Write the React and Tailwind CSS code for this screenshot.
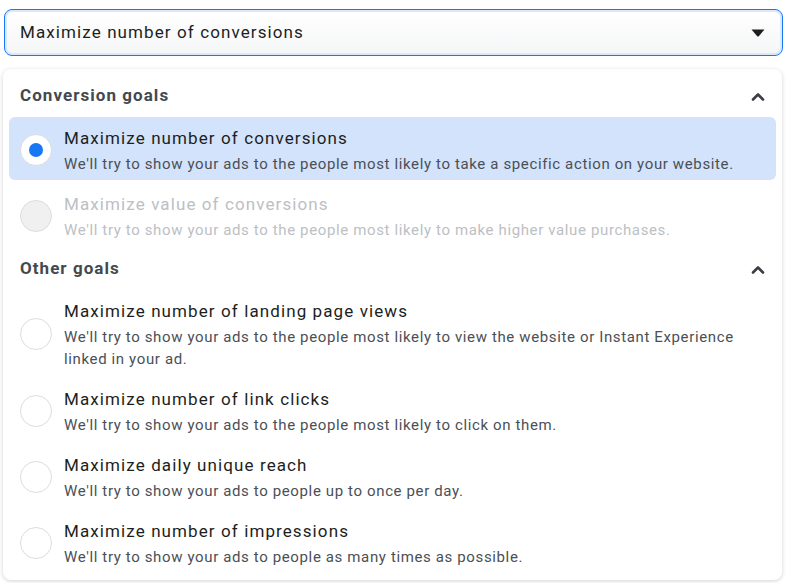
import React, { useState } from 'react';

const groups = [
  {
    title: 'Conversion goals',
    options: [
      {
        id: 'conversions',
        label: 'Maximize number of conversions',
        desc: "We'll try to show your ads to the people most likely to take a specific action on your website.",
      },
      {
        id: 'value',
        label: 'Maximize value of conversions',
        desc: "We'll try to show your ads to the people most likely to make higher value purchases.",
        disabled: true,
      },
    ],
  },
  {
    title: 'Other goals',
    options: [
      {
        id: 'landing',
        label: 'Maximize number of landing page views',
        desc: "We'll try to show your ads to the people most likely to view the website or Instant Experience linked in your ad.",
      },
      {
        id: 'clicks',
        label: 'Maximize number of link clicks',
        desc: "We'll try to show your ads to the people most likely to click on them.",
      },
      {
        id: 'reach',
        label: 'Maximize daily unique reach',
        desc: "We'll try to show your ads to people up to once per day.",
      },
      {
        id: 'impressions',
        label: 'Maximize number of impressions',
        desc: "We'll try to show your ads to people as many times as possible.",
      },
    ],
  },
];

const Radio = ({ checked, disabled }) => (
  <span
    className={`flex h-[32px] w-[32px] shrink-0 items-center justify-center rounded-full border ${
      disabled ? 'border-[#dadde1] bg-[#f0f0f0]' : 'border-[#dadde1] bg-white'
    }`}
  >
    {checked && <span className="h-[14px] w-[14px] rounded-full bg-[#1877f2]" />}
  </span>
);

const Chevron = () => (
  <svg width="14" height="9" viewBox="0 0 14 9" className="mr-[11px]">
    <path d="M2 7.5 L7 2.5 L12 7.5" fill="none" stroke="#3b3e43" strokeWidth="2.6" strokeLinecap="round" strokeLinejoin="round" />
  </svg>
);

export default function App() {
  const [selected, setSelected] = useState('conversions');
  const current = groups.flatMap((g) => g.options).find((o) => o.id === selected);

  return (
    <div className="min-h-[583px] w-[786px] bg-white pt-[9px] pl-[4px] pr-[3px] font-['Roboto',sans-serif]">
      {/* Select */}
      <div className="flex h-[47px] items-center justify-between rounded-[8px] border border-[#1877f2] bg-gradient-to-b from-white to-[#f5f6f7] pl-[15px] pr-[17px] shadow-[inset_0_0_0_2px_#dbe7fb]">
        <span className="text-[17px] tracking-[1.1px] text-[#1c1e21]">{current.label}</span>
        <svg width="14" height="8" viewBox="0 0 14 8">
          <path d="M0.5 0.5 H13.5 L8 7 Q7 8 6 7 Z" fill="#1c1e21" />
        </svg>
      </div>

      {/* Dropdown panel */}
      <div className="mt-[13px] -ml-[1px] mr-[1px] rounded-[8px] bg-white px-[6px] pt-[12px] pb-[4px] shadow-[0_1px_4px_rgba(0,0,0,0.18)]">
        {groups.map((group, gi) => (
          <div key={group.title} className={gi > 0 ? 'mt-[8px]' : ''}>
            <div className="mb-[6px] flex h-[30px] items-center justify-between pl-[11px]">
              <span className="text-[17px] font-bold tracking-[1.05px] text-[#444950]">{group.title}</span>
              <Chevron />
            </div>
            {group.options.map((opt) => {
              const checked = opt.id === selected;
              return (
                <div
                  key={opt.id}
                  onClick={() => !opt.disabled && setSelected(opt.id)}
                  className={`mb-[3px] flex items-center gap-[12px] rounded-[6px] pt-[8px] pb-[5px] pl-[11px] pr-[12px] ${
                    checked ? 'bg-[#d2e3fb]' : ''
                  } ${opt.disabled ? '' : 'cursor-pointer'}`}
                >
                  <Radio checked={checked} disabled={opt.disabled} />
                  <div className="flex flex-col">
                    <span
                      className={`text-[17px] leading-[26px] tracking-[1.1px] ${
                        opt.disabled ? 'text-[#bcc0c4]' : 'text-[#1c1e21]'
                      }`}
                    >
                      {opt.label}
                    </span>
                    <span
                      className={`mt-[2px] text-[15px] leading-[22px] tracking-[0.63px] ${
                        opt.disabled ? 'text-[#bcc0c4]' : 'text-[#4b4f56]'
                      }`}
                    >
                      {opt.desc}
                    </span>
                  </div>
                </div>
              );
            })}
          </div>
        ))}
      </div>
    </div>
  );
}
